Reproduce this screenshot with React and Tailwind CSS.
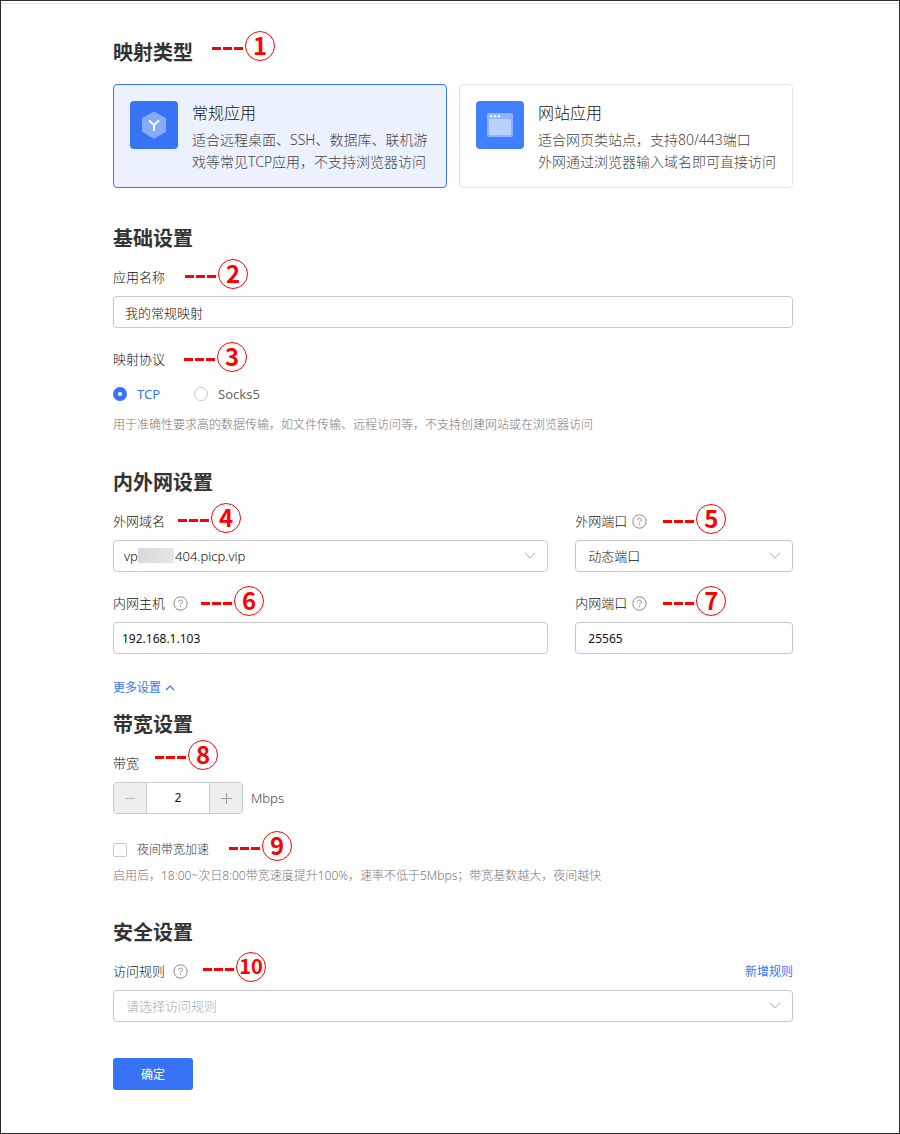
import { useState } from "react";

const inputStyle =
  "h-8 w-full rounded border border-[#c8c9cc] bg-white text-[#111] outline-none focus:border-[#3873f6]";

const radioStyle =
  "h-3.5 w-3.5 appearance-none rounded-full border border-[#c8c9cc] bg-white checked:border-5 checked:border-[#3873f6]";

function Callout({ number, className = "" }) {
  return (
    <span className={`flex shrink-0 items-center gap-0.5 ${className}`}>
      <span className="mt-1 flex gap-0.5">
        <span className="h-[3px] w-[9px] bg-[#f00]" />
        <span className="h-[3px] w-[9px] bg-[#f00]" />
        <span className="h-[3px] w-[9px] bg-[#f00]" />
      </span>
      <span
        className={`flex h-[30px] w-[30px] items-center justify-center rounded-full border border-[#f00] pb-0.5 font-['Noto_Sans_CJK_SC',sans-serif] leading-7 font-bold text-[#f00] ${
          number.length > 1 ? "text-xl" : "text-2xl"
        }`}
      >
        {number}
      </span>
    </span>
  );
}

function HelpIcon() {
  return (
    <svg viewBox="0 0 15 15" className="h-[15px] w-[15px] shrink-0" fill="none" stroke="#8a8a8a" aria-hidden="true">
      <circle cx="7.5" cy="7.5" r="6.7" />
      <path d="M5.5 6.1c0-1.3.9-2 2-2s2 .7 2 1.7c0 1.3-2 1.5-2 2.9" />
      <path d="M7.5 9.9v1.2" />
    </svg>
  );
}

function Chevron() {
  return (
    <svg viewBox="0 0 12 7" className="pointer-events-none absolute top-3 right-3 h-[7px] w-3" fill="none" stroke="#c0c4cc" aria-hidden="true">
      <path d="M1 .8l5 5 5-5" strokeWidth="1.2" />
    </svg>
  );
}

function SectionTitle({ children }) {
  return <h2 className="text-xl leading-[30px] font-bold text-[#333]">{children}</h2>;
}

function LabelRow({ children, className = "" }) {
  return <div className={`mb-1 flex h-[30px] items-center text-[13px] text-[#111] ${className}`}>{children}</div>;
}

function TypeCard({ active, title, lines, icon, onClick }) {
  return (
    <button
      type="button"
      aria-pressed={active}
      onClick={onClick}
      className={`flex items-start gap-3.5 rounded border px-4 pt-4 pb-3.5 text-left ${
        active ? "border-[#3873f6] bg-[#ebf1ff]" : "border-[#e4e4e6] bg-white"
      }`}
    >
      {icon}
      <span className="min-w-0">
        <span className="block text-base leading-6 text-[#111]">{title}</span>
        <span className="mt-1 block text-sm leading-[22px] whitespace-nowrap text-[#444]">
          {lines[0]}
          <br />
          {lines[1]}
        </span>
      </span>
    </button>
  );
}

function AppIcon() {
  return (
    <svg viewBox="0 0 48 48" className="h-12 w-12 shrink-0" aria-hidden="true">
      <rect width="48" height="48" rx="4" fill="#3873f6" />
      <path d="M24 10.5l12 6.8v13.4l-12 7-12-7V17.3z" fill="#88abf9" />
      <path d="M19 19.5l5 4.5 5-4.5M24 24v6" fill="none" stroke="#fff" strokeWidth="2" />
    </svg>
  );
}

function SiteIcon() {
  return (
    <svg viewBox="0 0 48 48" className="h-12 w-12 shrink-0" aria-hidden="true">
      <rect width="48" height="48" rx="4" fill="#4080ff" />
      <rect x="11" y="12" width="26" height="24" rx="1.5" fill="#8cb3ff" />
      <rect x="13" y="18" width="22" height="16" rx="1" fill="#bad1ff" />
      <circle cx="15" cy="15.3" r="1.3" fill="#fff" />
      <circle cx="19" cy="15.3" r="1.3" fill="#fff" />
      <circle cx="23" cy="15.3" r="1.3" fill="#fff" />
    </svg>
  );
}

export default function App() {
  const [type, setType] = useState("normal");
  const [protocol, setProtocol] = useState("tcp");
  const [bandwidth, setBandwidth] = useState(2);

  return (
    <main className="border border-[#2f2b2f] bg-white font-['Noto_Sans','Noto_Sans_CJK_SC',sans-serif] text-[13px] leading-5 font-light">
      <div className="mt-0.5 h-px bg-[#e6e0e8]" />
      <form className="pt-[34px] pr-[106px] pb-[43px] pl-28" onSubmit={(event) => event.preventDefault()}>
        <div className="flex h-[30px] items-center">
          <SectionTitle>映射类型</SectionTitle>
          <Callout number="1" className="mb-3.5 ml-[19px]" />
        </div>
        <div className="mt-4 grid grid-cols-2 gap-3">
          <TypeCard
            active={type === "normal"}
            title="常规应用"
            lines={["适合远程桌面、SSH、数据库、联机游", "戏等常见TCP应用，不支持浏览器访问"]}
            icon={<AppIcon />}
            onClick={() => setType("normal")}
          />
          <TypeCard
            active={type === "site"}
            title="网站应用"
            lines={["适合网页类站点，支持80/443端口", "外网通过浏览器输入域名即可直接访问"]}
            icon={<SiteIcon />}
            onClick={() => setType("site")}
          />
        </div>

        <section className="mt-9">
          <SectionTitle>基础设置</SectionTitle>
          <LabelRow className="mt-2">
            <label htmlFor="app-name">应用名称</label>
            <Callout number="2" className="mb-1.5 ml-5" />
          </LabelRow>
          <input id="app-name" type="text" defaultValue="我的常规映射" className={`${inputStyle} px-[11px]`} />

          <div role="radiogroup" aria-labelledby="protocol-label" className="mt-4">
            <div className="mb-2.5 flex h-[30px] items-center text-[#111]">
              <span id="protocol-label">映射协议</span>
              <Callout number="3" className="mb-1 ml-[19px]" />
            </div>
            <div className="flex gap-[34px] font-normal">
              <label className={`flex items-center gap-2.5 ${protocol === "tcp" ? "text-[#3873f6]" : "text-[#666]"}`}>
                <input
                  type="radio"
                  name="protocol"
                  checked={protocol === "tcp"}
                  onChange={() => setProtocol("tcp")}
                  className={radioStyle}
                />
                TCP
              </label>
              <label className={`flex items-center gap-2.5 ${protocol === "socks5" ? "text-[#3873f6]" : "text-[#666]"}`}>
                <input
                  type="radio"
                  name="protocol"
                  checked={protocol === "socks5"}
                  onChange={() => setProtocol("socks5")}
                  className={radioStyle}
                />
                Socks5
              </label>
            </div>
          </div>
          <p className="mt-2.5 text-xs leading-[22px] text-[#777]">
            用于准确性要求高的数据传输，如文件传输、远程访问等，不支持创建网站或在浏览器访问
          </p>
        </section>

        <section className="mt-8">
          <SectionTitle>内外网设置</SectionTitle>
          <div className="mt-2 grid grid-cols-[2fr_1fr] gap-x-[27px] gap-y-4">
            <div>
              <LabelRow>
                <label htmlFor="domain">外网域名</label>
                <Callout number="4" className="mb-1.5 ml-[13px]" />
              </LabelRow>
              <div className="relative">
                <select id="domain" className={`${inputStyle} appearance-none px-2.5`}>
                  <option>{`vp${"\u00a0".repeat(11)}404.picp.vip`}</option>
                </select>
                <span className="absolute top-2 left-[25px] h-[15px] w-9 bg-linear-to-r from-[#d9d9dc] to-[#e6e6e9]" />
                <Chevron />
              </div>
            </div>
            <div>
              <LabelRow>
                <label htmlFor="outer-port" className="mr-[5px]">外网端口</label>
                <HelpIcon />
                <Callout number="5" className="mb-1 ml-4" />
              </LabelRow>
              <div className="relative">
                <select id="outer-port" className={`${inputStyle} appearance-none px-3`}>
                  <option>动态端口</option>
                </select>
                <Chevron />
              </div>
            </div>
            <div>
              <LabelRow>
                <label htmlFor="host" className="mr-2">内网主机</label>
                <HelpIcon />
                <Callout number="6" className="mb-1 ml-[13px]" />
              </LabelRow>
              <input
                id="host"
                type="text"
                defaultValue="192.168.1.103"
                className={`${inputStyle} px-2 text-xs font-normal`}
              />
            </div>
            <div>
              <LabelRow>
                <label htmlFor="inner-port" className="mr-[5px]">内网端口</label>
                <HelpIcon />
                <Callout number="7" className="mb-1 ml-4" />
              </LabelRow>
              <input
                id="inner-port"
                type="text"
                defaultValue="25565"
                className={`${inputStyle} px-3 text-xs font-normal`}
              />
            </div>
          </div>
        </section>

        <button
          type="button"
          className="mt-[23px] flex items-center gap-1 text-xs leading-[22px] font-normal text-[#3873f6]"
        >
          更多设置
          <svg viewBox="0 0 10 6" className="h-1.5 w-2.5" fill="none" stroke="currentColor" aria-hidden="true">
            <path d="M1 5l4-4 4 4" strokeWidth="1.2" />
          </svg>
        </button>

        <section className="mt-[11px]">
          <SectionTitle>带宽设置</SectionTitle>
          <LabelRow className="mt-2">
            <label htmlFor="bandwidth">带宽</label>
            <Callout number="8" className="mb-4 ml-4" />
          </LabelRow>
          <div className="flex items-center gap-2 text-[#444]">
            <div className="flex h-8 w-[130px] overflow-hidden rounded border border-[#c8c9cc]">
              <button
                type="button"
                aria-label="减少"
                onClick={() => setBandwidth(Math.max(1, bandwidth - 1))}
                className="flex w-[33px] shrink-0 items-center justify-center border-r border-[#c8c9cc] bg-[#edeef0]"
              >
                <span className="h-px w-2.5 bg-[#b8bcc4]" />
              </button>
              <input
                id="bandwidth"
                type="text"
                value={bandwidth}
                onChange={(event) => setBandwidth(Number(event.target.value) || 1)}
                className="w-full min-w-0 bg-white text-center text-xs font-normal text-[#111] outline-none"
              />
              <button
                type="button"
                aria-label="增加"
                onClick={() => setBandwidth(bandwidth + 1)}
                className="flex w-[33px] shrink-0 items-center justify-center border-l border-[#c8c9cc] bg-[#edeef0]"
              >
                <svg viewBox="0 0 11 11" className="h-[11px] w-[11px]" stroke="#999" aria-hidden="true">
                  <path d="M0 5.5h11M5.5 0v11" />
                </svg>
              </button>
            </div>
            <span>Mbps</span>
          </div>
          <div className="mt-[21px] flex h-[30px] items-center text-xs text-[#333]">
            <label className="flex items-center gap-2.5">
              <input
                type="checkbox"
                className="h-3.5 w-3.5 appearance-none rounded-xs border border-[#c8c9cc] bg-white checked:border-[#3873f6] checked:bg-[#3873f6]"
              />
              夜间带宽加速
            </label>
            <Callout number="9" className="mb-2 ml-5" />
          </div>
          <p className="mt-px text-xs leading-5 text-[#777]">
            启用后，18:00~次日8:00带宽速度提升100%，速率不低于5Mbps；带宽基数越大，夜间越快
          </p>
        </section>

        <section className="mt-8">
          <SectionTitle>安全设置</SectionTitle>
          <LabelRow className="mt-2">
            <label htmlFor="rule" className="mr-2">访问规则</label>
            <HelpIcon />
            <Callout number="10" className="mb-2 ml-[15px]" />
            <a href="#rules" className="ml-auto pt-0.5 text-xs font-normal text-[#3873f6]">新增规则</a>
          </LabelRow>
          <div className="relative">
            <select id="rule" defaultValue="" className={`${inputStyle} appearance-none px-3 text-[#a4a8b4]!`}>
              <option value="">请选择访问规则</option>
            </select>
            <Chevron />
          </div>
        </section>

        <button type="submit" className="mt-9 h-8 w-20 rounded-[3px] bg-[#3873f6] pt-0.5 text-xs font-normal text-white">
          确定
        </button>
      </form>
    </main>
  );
}
